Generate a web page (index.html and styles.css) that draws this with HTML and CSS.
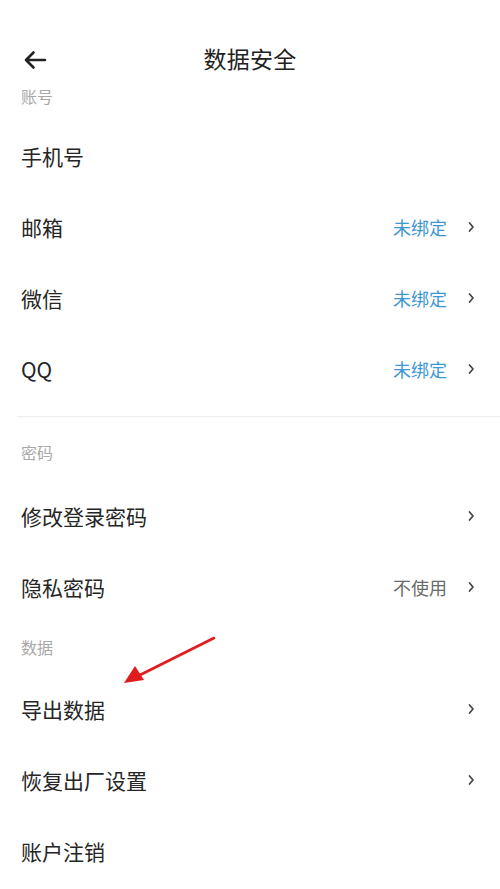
FILE: index.html
```html
<!DOCTYPE html>
<html lang="zh-CN">
<head>
<meta charset="utf-8">
<title>数据安全</title>
<link rel="stylesheet" href="styles.css">
</head>
<body>
<div class="page">
  <header class="header">
    <svg class="back" width="24" height="20" viewBox="0 0 24 20" aria-hidden="true">
      <path d="M22 10 H3 M10.5 2.5 L3 10 L10.5 17.5" fill="none" stroke="#222" stroke-width="2.6" stroke-linecap="round" stroke-linejoin="round"/>
    </svg>
    <h1 class="title">数据安全</h1>
  </header>

  <div class="label label-first">账号</div>
  <div class="row"><span class="name">手机号</span></div>
  <div class="row"><span class="name">邮箱</span><span class="value blue">未绑定</span><svg class="chev" width="8" height="12" viewBox="0 0 8 12"><path d="M2.5 2 L6 6 L2.5 10" fill="none" stroke="#444" stroke-width="1.7" stroke-linecap="round" stroke-linejoin="round"/></svg></div>
  <div class="row"><span class="name">微信</span><span class="value blue">未绑定</span><svg class="chev" width="8" height="12" viewBox="0 0 8 12"><path d="M2.5 2 L6 6 L2.5 10" fill="none" stroke="#444" stroke-width="1.7" stroke-linecap="round" stroke-linejoin="round"/></svg></div>
  <div class="row"><span class="name">QQ</span><span class="value blue">未绑定</span><svg class="chev" width="8" height="12" viewBox="0 0 8 12"><path d="M2.5 2 L6 6 L2.5 10" fill="none" stroke="#444" stroke-width="1.7" stroke-linecap="round" stroke-linejoin="round"/></svg></div>

  <div class="divider"></div>

  <div class="label label-second">密码</div>
  <div class="row"><span class="name">修改登录密码</span><svg class="chev" width="8" height="12" viewBox="0 0 8 12"><path d="M2.5 2 L6 6 L2.5 10" fill="none" stroke="#444" stroke-width="1.7" stroke-linecap="round" stroke-linejoin="round"/></svg></div>
  <div class="row"><span class="name">隐私密码</span><span class="value">不使用</span><svg class="chev" width="8" height="12" viewBox="0 0 8 12"><path d="M2.5 2 L6 6 L2.5 10" fill="none" stroke="#444" stroke-width="1.7" stroke-linecap="round" stroke-linejoin="round"/></svg></div>

  <div class="label">数据</div>
  <div class="row"><span class="name">导出数据</span><svg class="chev" width="8" height="12" viewBox="0 0 8 12"><path d="M2.5 2 L6 6 L2.5 10" fill="none" stroke="#444" stroke-width="1.7" stroke-linecap="round" stroke-linejoin="round"/></svg></div>
  <div class="row"><span class="name">恢复出厂设置</span><svg class="chev" width="8" height="12" viewBox="0 0 8 12"><path d="M2.5 2 L6 6 L2.5 10" fill="none" stroke="#444" stroke-width="1.7" stroke-linecap="round" stroke-linejoin="round"/></svg></div>
  <div class="row"><span class="name">账户注销</span></div>

  <svg class="annotation" width="500" height="889" viewBox="0 0 500 889" aria-hidden="true">
    <line x1="214" y1="638" x2="140" y2="675" stroke="#e01b1b" stroke-width="2.6" stroke-linecap="round"/>
    <polygon points="124,683 135,666 144,680" fill="#e01b1b"/>
  </svg>
</div>
</body>
</html>
```

FILE: styles.css
```css
* { box-sizing: border-box; }
html, body {
  margin: 0;
  padding: 0;
  background: #ffffff;
}
body {
  font-family: "Noto Sans CJK SC", "Noto Sans", sans-serif;
  color: #222222;
}
.page {
  position: relative;
  width: 500px;
  height: 889px;
  overflow: hidden;
}
.header {
  position: relative;
  height: 74px;
  padding-top: 44px;
  display: flex;
  justify-content: center;
}
.back {
  position: absolute;
  left: 23px;
  top: 50px;
}
.title {
  margin: 0;
  font-size: 23px;
  font-weight: 400;
  line-height: 28px;
  color: #222;
  letter-spacing: 0.3px;
}
.label {
  padding: 13px 21px 14px;
  font-size: 16px;
  line-height: 24px;
  color: #a8a8a8;
}
.label-first { padding-top: 10px; padding-bottom: 12px; }
.label-second { padding-top: 23px; padding-bottom: 16px; }
.row {
  height: 71px;
  display: flex;
  align-items: center;
  padding: 0 25px 0 21px;
}
.name {
  flex: 1;
  font-size: 21px;
  color: #252525;
}
.value {
  font-size: 18px;
  color: #6a6a6a;
  margin-right: 20px;
}
.value.blue { color: #3d97d3; }
.chev { display: block; }
.divider {
  margin: 12px 0 0 17px;
  height: 1px;
  background: #ececec;
}
.annotation {
  position: absolute;
  left: 0;
  top: 0;
  pointer-events: none;
}
```
